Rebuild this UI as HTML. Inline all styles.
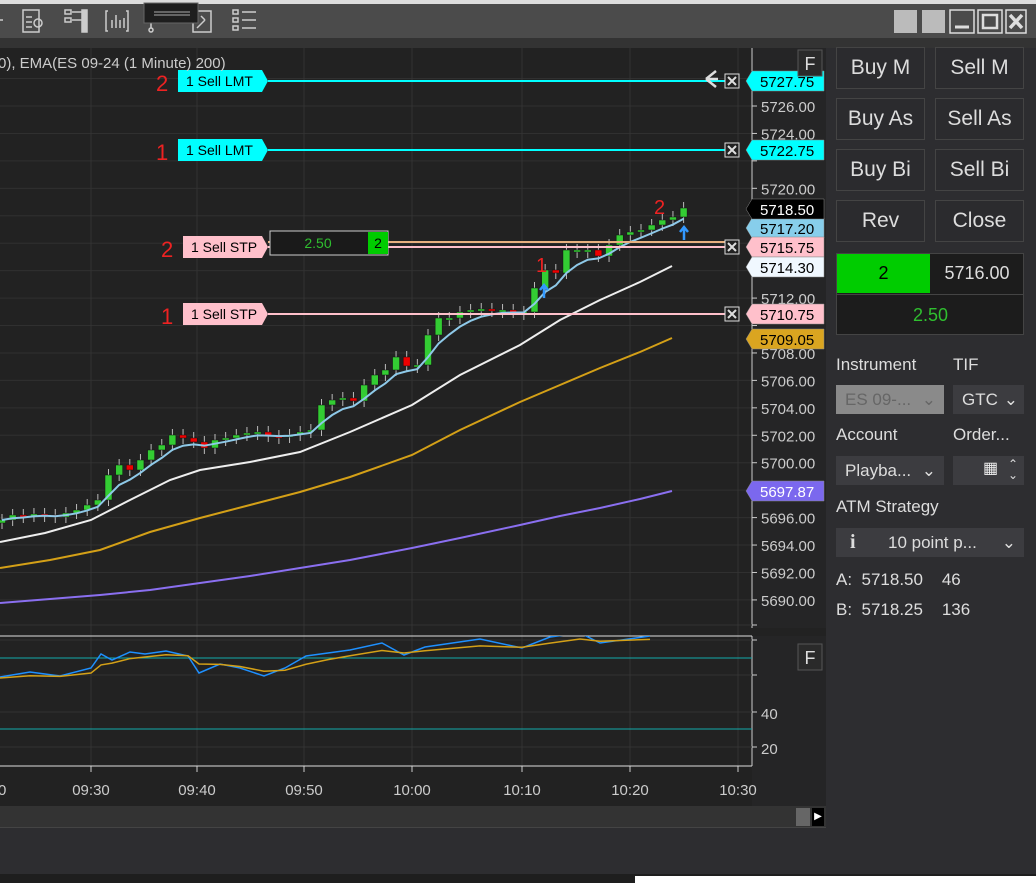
<!DOCTYPE html>
<html><head><meta charset="utf-8"><style>
*{margin:0;padding:0;box-sizing:border-box}
body{width:1036px;height:883px;overflow:hidden;background:#2d2d30;font-family:"Liberation Sans",sans-serif;position:relative}
.a{position:absolute}
.btn{position:absolute;width:89px;height:42px;border:1px solid #444;background:#2b2b2e;color:#ddd;font-size:21px;text-align:center;line-height:40px;overflow:hidden;white-space:nowrap}
.lbl{position:absolute;color:#ddd;font-size:17px}
.dd{position:absolute;background:#3c3c40;color:#ddd;font-size:17px;height:29px;line-height:29px}
</style></head><body>
<div class="a" style="left:0;top:0;width:1036px;height:4px;background:#ddd"></div>
<div class="a" style="left:0;top:4px;width:1036px;height:34px;background:#4b4b4b"></div>
<div class="a" style="left:0;top:38px;width:1036px;height:10px;background:#333"></div>
<svg class="a" style="left:0;top:0" width="1036" height="48">
 <g stroke="#ccc" fill="none" stroke-width="1.5">
 <path d="M0 20h3"/><rect x="23" y="10" width="16" height="22"/><path d="M26 17h6M26 22h6M26 27h6"/><circle cx="38" cy="23" r="4"/>
 <rect x="65" y="10" width="6" height="4"/><rect x="65" y="18" width="6" height="4"/><path d="M72 12h10M72 20h10"/><rect x="82" y="10" width="5" height="22" fill="#ccc"/>
 <path d="M108 11h-2v20h2M126 11h2v20h-2M112 28v-8M116 28v-13M120 28v-8M124 28v-10"/>
 <circle cx="151" cy="30" r="2"/><path d="M151 28v-6"/>
 <rect x="193" y="11" width="18" height="21"/><path d="M197 28l8-8M201 16l4 4"/>
 <rect x="233" y="10" width="5" height="4"/><rect x="233" y="18" width="5" height="4"/><rect x="233" y="26" width="5" height="4"/><path d="M242 12h14M242 20h14M242 28h14"/>
 </g>
 <rect x="144" y="3" width="54" height="20" fill="#1e1e1e" stroke="#666"/><path d="M154 12h36M154 15h36" stroke="#aaa"/>
 <rect x="894" y="10" width="23" height="23" fill="#bbb"/><rect x="922" y="10" width="23" height="23" fill="#bbb"/>
 <g stroke="#ddd" fill="none" stroke-width="1.5"><rect x="950" y="10" width="24" height="23"/><path d="M955 27h14" stroke-width="3"/>
 <rect x="978" y="10" width="24" height="23"/><rect x="983" y="15" width="14" height="13" stroke-width="2.5"/>
 <rect x="1006" y="10" width="20" height="23"/><path d="M1010 15l12 13M1022 15l-12 13" stroke-width="3.5"/></g>
</svg>
<svg id="ch" class="a" style="left:0;top:48px" width="826" height="780" viewBox="0 48 826 780"></svg>
<div class="a" style="left:0;top:806px;width:826px;height:22px;background:#333;border-bottom:1px solid #444"></div>
<div class="a" style="left:796px;top:808px;width:14px;height:18px;background:#666"></div>
<div class="a" style="left:812px;top:808px;width:12px;height:18px;background:#000;color:#fff;font-size:10px;line-height:18px;text-align:center">▶</div>
<div class="a" style="left:0;top:874px;width:1036px;height:9px;background:#1e1e1e"></div>
<div class="a" style="left:635px;top:876px;width:401px;height:7px;background:#fff"></div>

<div class="btn" style="left:836px;top:47px">Buy M</div><div class="btn" style="left:935px;top:47px">Sell M</div>
<div class="btn" style="left:836px;top:98px">Buy As</div><div class="btn" style="left:935px;top:98px">Sell As</div>
<div class="btn" style="left:836px;top:149px">Buy Bi</div><div class="btn" style="left:935px;top:149px">Sell Bi</div>
<div class="btn" style="left:836px;top:200px">Rev</div><div class="btn" style="left:935px;top:200px">Close</div>
<div class="a" style="left:836px;top:253px;width:188px;height:82px;background:#1c1c1c;border:1px solid #444"></div>
<div class="a" style="left:837px;top:254px;width:93px;height:39px;background:#00cc00;color:#000;font-size:18px;text-align:center;line-height:39px">2</div>
<div class="a" style="left:930px;top:254px;width:94px;height:39px;color:#ddd;font-size:18px;text-align:center;line-height:39px">5716.00</div>
<div class="a" style="left:837px;top:294px;width:187px;height:40px;border-top:1px solid #444;color:#2fbf2f;font-size:18px;text-align:center;line-height:40px">2.50</div>
<div class="lbl" style="left:836px;top:355px">Instrument</div><div class="lbl" style="left:953px;top:355px">TIF</div>
<div class="dd" style="left:836px;top:385px;width:108px;background:#8a8a8a;color:#666;padding-left:9px">ES 09-... <span style="position:absolute;right:8px">⌄</span></div>
<div class="dd" style="left:953px;top:385px;width:71px;padding-left:9px">GTC <span style="position:absolute;right:6px">⌄</span></div>
<div class="lbl" style="left:836px;top:425px">Account</div><div class="lbl" style="left:953px;top:425px">Order...</div>
<div class="dd" style="left:836px;top:456px;width:108px;padding-left:9px">Playba... <span style="position:absolute;right:8px">⌄</span></div>
<div class="dd" style="left:953px;top:456px;width:71px;font-size:12px"><span style="position:absolute;left:30px;top:-2px;font-size:16px;color:#eee">▦</span><span style="position:absolute;left:55px;top:-6px;font-size:12px">⌃</span><span style="position:absolute;left:55px;top:5px;font-size:12px">⌄</span></div>
<div class="lbl" style="left:836px;top:497px">ATM Strategy</div>
<div class="dd" style="left:836px;top:528px;width:188px"><span style="position:absolute;left:14px;font-family:'Liberation Serif';font-weight:bold;font-size:20px">i</span><span style="position:absolute;left:52px">10 point p...</span><span style="position:absolute;right:8px">⌄</span></div>
<div class="lbl" style="left:836px;top:570px">A:&nbsp; 5718.50 &nbsp;&nbsp;&nbsp;46</div>
<div class="lbl" style="left:836px;top:600px">B:&nbsp; 5718.25 &nbsp;&nbsp;&nbsp;136</div>

<script>
var s='';function P(p){return 106+(5726-p)*13.72}
s+='<rect x="0" y="48" width="826" height="758" fill="#222"/>';
s+='<rect x="752" y="48" width="74" height="758" fill="#252526"/>';
s+='<rect x="0" y="775" width="752" height="31" fill="#222"/>';
for(var p=5690;p<=5728;p+=2){var y=P(p);s+='<line x1="0" y1="'+y+'" x2="752" y2="'+y+'" stroke="#303030"/><line x1="752" y1="'+y+'" x2="757" y2="'+y+'" stroke="#ccc"/>'+((p==5722||p==5710||p==5728)?'':'<text x="761" y="'+(y+6)+'" fill="#ccc" font-size="15">'+p+'.00</text>');}
var tx=[91,197,304,412,522,630,738],tl=['09:30','09:40','09:50','10:00','10:10','10:20','10:30'];
for(var i=0;i<7;i++){s+='<line x1="'+tx[i]+'" y1="48" x2="'+tx[i]+'" y2="766" stroke="#333"/><line x1="'+tx[i]+'" y1="766" x2="'+tx[i]+'" y2="772" stroke="#ccc"/><text x="'+tx[i]+'" y="795" fill="#ccc" font-size="15" text-anchor="middle">'+tl[i]+'</text>';}
s+='<text x="-2" y="795" fill="#ccc" font-size="15">0</text>';
s+='<line x1="752" y1="48" x2="752" y2="628" stroke="#ccc"/><line x1="752" y1="636" x2="752" y2="766" stroke="#ccc"/>';
s+='<line x1="0" y1="636" x2="752" y2="636" stroke="#ddd"/><line x1="0" y1="766" x2="752" y2="766" stroke="#ddd"/>';
s+='<rect x="752" y="628" width="74" height="8" fill="#222"/>';
[625,640,675,712,747].forEach(function(y){s+='<line x1="0" y1="'+y+'" x2="752" y2="'+y+'" stroke="#333"/><line x1="752" y1="'+y+'" x2="757" y2="'+y+'" stroke="#ccc"/>'});
s+='<text x="761" y="719" fill="#ccc" font-size="15">40</text><text x="761" y="754" fill="#ccc" font-size="15">20</text>';
s+='<line x1="0" y1="658" x2="752" y2="658" stroke="#1aa"/><line x1="0" y1="729" x2="752" y2="729" stroke="#1aa"/>';
var r=[[0,677],[30,672],[60,676],[91,668],[101,654],[112,660],[130,652],[145,654],[166,651],[188,656],[199,673],[220,664],[240,668],[264,676],[285,668],[306,656],[328,653],[350,650],[382,643],[404,655],[425,647],[480,639],[522,648],[550,637],[580,633],[600,643],[650,636]];
function pl(pts,c,w){return '<polyline fill="none" stroke="'+c+'" stroke-width="'+(w||1.5)+'" points="'+pts.map(function(q){return q[0]+','+q[1]}).join(' ')+'"/>'}
var o=[],e=r[0][1];r.forEach(function(q){e=e+0.45*(q[1]-e);o.push([q[0],e+1])});
s+='<svg x="0" y="636" width="752" height="130" viewBox="0 636 752 130">'+pl(r,'#1e90ff')+pl(o,'#d4a017')+'</svg>';
var cy=[520,515,516,514,515,517,513,510,505,500,475,465,470,460,450,445,435,438,442,448,440,438,435,433,432,436,437,435,432,430,405,400,398,401,385,375,370,357,366,365,335,318,318,312,310,309,310,310,312,312,288,270,273,250,250,250,256,245,235,232,230,225,220,217,208];
var cl=[],ey=cy[0];
for(var i=0;i<cy.length;i++){var x=2+i*10.65,op=i?cy[i-1]:cy[0]+3,c=cy[i];var up=c<=op;var t=Math.min(op,c),b=Math.max(op,c);if(b-t<2){b=t+2}
s+='<line x1="'+x+'" y1="'+(t-6)+'" x2="'+x+'" y2="'+(b+6)+'" stroke="#bbb"/><rect x="'+(x-3.5)+'" y="'+t+'" width="7" height="'+(b-t)+'" fill="'+(up?'#3c3':'#e00')+'" stroke="#111" stroke-width=".5"/>';
ey=ey+0.35*(c-ey);cl.push([x,ey]);}
s+=pl(cl,'#8ec9e8',2);
s+=pl([[0,542],[45,533],[91,520],[130,500],[170,480],[200,470],[250,462],[300,452],[350,432],[412,405],[460,375],[520,345],[560,320],[600,300],[640,282],[672,266]],'#eee',2);
s+=pl([[0,568],[50,560],[100,550],[150,532],[200,518],[250,505],[300,492],[350,477],[412,455],[460,430],[520,402],[560,385],[600,368],[640,352],[672,338]],'#d4a017',2);
s+=pl([[0,603],[100,595],[150,590],[200,583],[250,576],[300,568],[350,560],[412,548],[460,538],[520,525],[560,516],[600,508],[640,499],[672,491]],'#8a6ff0',2);
function ord(y,col,txt,num,bx){s+='<line x1="268" y1="'+y+'" x2="726" y2="'+y+'" stroke="'+col+'" stroke-width="2"/><path d="M'+bx+' '+(y-11)+'h'+(268-bx-6)+'l6 11l-6 11h-'+(268-bx-6)+'z" fill="'+col+'"/><text x="'+(bx+8)+'" y="'+(y+5)+'" font-size="14" fill="#000">'+txt+'</text><text x="'+(bx-22)+'" y="'+(y+10)+'" font-size="22" fill="#e22">'+num+'</text><rect x="725" y="'+(y-7)+'" width="14" height="14" fill="#222" stroke="#ddd"/><path d="M728 '+(y-4)+'l8 8M736 '+(y-4)+'l-8 8" stroke="#ddd" stroke-width="2"/>';}
ord(81,'#00ffff','1 Sell LMT','2',178);ord(150,'#00ffff','1 Sell LMT','1',178);
s+='<line x1="268" y1="242" x2="726" y2="242" stroke="#e8b080" stroke-width="2"/>';
ord(247,'#ffc0cb','1 Sell STP','2',183);ord(314,'#ffc0cb','1 Sell STP','1',183);
s+='<rect x="270" y="231" width="118" height="24" fill="#1a1a1a" stroke="#ccc"/><text x="318" y="248" fill="#2fbf2f" font-size="14" text-anchor="middle">2.50</text><rect x="368" y="232" width="20" height="22" fill="#0c0"/><text x="378" y="248" font-size="14" text-anchor="middle">2</text>';
s+='<path d="M706 79l10-8M706 79l10 8M706 79h12" stroke="#ddd" stroke-width="2.5" fill="none"/>';
s+='<path d="M544 298v-12M540 290l4-5l4 5M684 240v-12M680 232l4-5l4 5" stroke="#39f" stroke-width="2.5" fill="none"/>';
s+='<text x="536" y="272" font-size="20" fill="#e22">1</text><text x="654" y="214" font-size="20" fill="#e22">2</text>';
function pt(y,bg,fg,t,h){h=h||20;s+='<path d="M752 '+(y-h/2)+'h72v'+h+'h-72l-6 -'+h/2+'z" fill="'+bg+'" stroke="#888" stroke-width=".5"/><text x="760" y="'+(y+6)+'" font-size="15" fill="'+fg+'">'+t+'</text>';}
pt(228,'#87ceeb','#000','5717.20');pt(209,'#000','#fff','5718.50');
pt(81,'#00ffff','#000','5727.75');pt(150,'#00ffff','#000','5722.75');pt(247,'#ffc0cb','#000','5715.75');pt(267,'#f0f8ff','#000','5714.30');
pt(314,'#ffc0cb','#000','5710.75');pt(339,'#daa520','#000','5709.05');pt(491,'#7b68ee','#fff','5697.87');
s+='<rect x="798" y="50" width="24" height="26" fill="#2a2a2a" stroke="#555"/><text x="810" y="70" fill="#ddd" font-size="18" text-anchor="middle">F</text>';
s+='<rect x="798" y="644" width="24" height="26" fill="#2a2a2a" stroke="#555"/><text x="810" y="664" fill="#ddd" font-size="18" text-anchor="middle">F</text>';
s+='<text x="-2" y="68" fill="#ccc" font-size="15">0), EMA(ES 09-24 (1 Minute) 200)</text>';
document.getElementById('ch').innerHTML=s;
</script>
</body></html>
